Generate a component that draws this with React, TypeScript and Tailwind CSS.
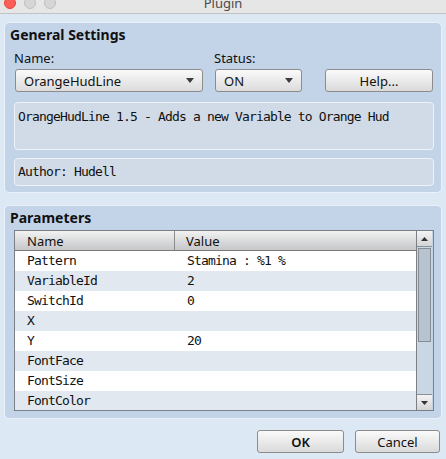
import React from 'react';

const mono = "font-['DejaVu_Sans_Mono',monospace] text-[13px] tracking-[-0.83px] text-[#111]";

const rows: [string, string][] = [
  ['Pattern', 'Stamina : %1 %'],
  ['VariableId', '2'],
  ['SwitchId', '0'],
  ['X', ''],
  ['Y', '20'],
  ['FontFace', ''],
  ['FontSize', ''],
  ['FontColor', ''],
];

function Caret() {
  return (
    <svg width="8" height="5" viewBox="0 0 8 5" className="shrink-0">
      <path d="M0 0 H8 L4 5 Z" fill="#3c3c3c" />
    </svg>
  );
}

function Dropdown({ value, width }: { value: string; width: string }) {
  return (
    <div className={`${width} h-[23px] flex items-center justify-between pl-[8px] pr-[8px] rounded-[3px] border border-[#8c8c8c] bg-gradient-to-b from-[#fafafa] to-[#dcdcdc]`}>
      <span className="leading-[16px]">{value}</span>
      <Caret />
    </div>
  );
}

function Btn({ label, width, bold }: { label: string; width: string; bold?: boolean }) {
  return (
    <div className={`${width} h-[23px] flex items-center justify-center rounded-[3px] border border-[#8c8c8c] bg-gradient-to-b from-[#fafafa] to-[#dadada] ${bold ? 'font-semibold' : ''}`}>
      <span className="leading-[16px]">{label}</span>
    </div>
  );
}

export default function App() {
  return (
    <div className="w-[446px] h-[459px] overflow-hidden bg-[#dde8f5] font-['Noto_Sans',sans-serif] text-[13px] text-[#111]">
      {/* Title bar */}
      <div className="h-[14px] overflow-hidden bg-[#e6e6e6] border-b border-[#c2c2c2] grid">
        <div className="col-start-1 row-start-1 flex gap-[8px] pl-[4px] -mt-[3px]">
          <div className="w-[12px] h-[12px] rounded-full bg-[#fc5f57] border border-[#e0443e]" />
          <div className="w-[12px] h-[12px] rounded-full bg-[#d6d6d6] border border-[#c0c0c0]" />
          <div className="w-[12px] h-[12px] rounded-full bg-[#d6d6d6] border border-[#c0c0c0]" />
        </div>
        <div className="col-start-1 row-start-1 text-center -mt-[5px] leading-[16px] text-[#4a4a4a]">Plugin</div>
      </div>

      <div className="px-[4px] pt-[8px]">
        {/* General Settings */}
        <div className="h-[171px] rounded-[5px] border border-[#eaf1fa] bg-[#c3d4e9] pt-[4px] pl-[5px]">
          <div className="font-bold text-[14px] leading-[16px]">General Settings</div>
          <div className="flex mt-[7px] pl-[4px] leading-[16px]">
            <span className="w-[200px]">Name:</span>
            <span>Status:</span>
          </div>
          <div className="flex mt-[3px] pl-[5px]">
            <Dropdown value="OrangeHudLine" width="w-[188px]" />
            <div className="ml-[12px]">
              <Dropdown value="ON" width="w-[87px]" />
            </div>
            <div className="ml-[23px]">
              <Btn label="Help..." width="w-[108px]" />
            </div>
          </div>
          <div className="ml-[4px] mt-[10px] w-[420px] h-[48px] rounded-[4px] border border-[#eef3f9] bg-[#d0dbe7] px-[3px] pt-[6px]">
            <div className={`${mono} leading-[16px]`}>OrangeHudLine 1.5 - Adds a new Variable to Orange Hud</div>
          </div>
          <div className="ml-[4px] mt-[8px] w-[420px] h-[28px] rounded-[4px] border border-[#eef3f9] bg-[#d0dbe7] px-[3px] flex items-center">
            <div className={`${mono} leading-[16px]`}>Author: Hudell</div>
          </div>
        </div>

        {/* Parameters */}
        <div className="mt-[12px] h-[214px] rounded-[5px] border border-[#eaf1fa] bg-[#c3d4e9] pt-[4px] pl-[5px]">
          <div className="font-bold text-[14px] leading-[16px]">Parameters</div>
          <div className="ml-[4px] mt-[4px] w-[420px] h-[181px] border border-[#7b8087] flex overflow-hidden">
            <div className="w-[402px] border-r border-[#7b8087] flex flex-col">
              <div className="h-[20px] shrink-0 flex border-b border-[#7b7b7b] bg-gradient-to-b from-[#f2f2f2] to-[#c5c7c9] leading-[16px]">
                <div className="w-[160px] pl-[12px] border-r border-[#8d8d8d] flex items-center">Name</div>
                <div className="pl-[11px] flex items-center">Value</div>
              </div>
              {rows.map(([n, v], i) => (
                <div key={n} className={`h-[20px] shrink-0 flex items-center ${i % 2 === 0 ? 'bg-white' : 'bg-[#e2e8ef]'}`}>
                  <div className={`${mono} w-[160px] pl-[12px] leading-[16px]`}>{n}</div>
                  <div className={`${mono} pl-[12px] leading-[16px]`}>{v}</div>
                </div>
              ))}
            </div>
            <div className="w-[15px] bg-[#c9d6e3] flex flex-col">
              <div className="h-[16px] flex items-center justify-center border-b border-[#8a9096] bg-gradient-to-b from-[#f4f4f4] to-[#d4d4d4]">
                <svg width="7" height="4" viewBox="0 0 7 4"><path d="M0 4 H7 L3.5 0 Z" fill="#333" /></svg>
              </div>
              <div className="mt-[1px] mx-[1px] h-[94px] border border-[#878d93] bg-[#b7c4d0]" />
              <div className="flex-1" />
              <div className="h-[16px] flex items-center justify-center border-t border-[#8a9096] bg-gradient-to-b from-[#f4f4f4] to-[#d4d4d4]">
                <svg width="7" height="4" viewBox="0 0 7 4"><path d="M0 0 H7 L3.5 4 Z" fill="#333" /></svg>
              </div>
            </div>
          </div>
        </div>
      </div>

      {/* Dialog buttons */}
      <div className="flex justify-end gap-[11px] pr-[6px] mt-[11px]">
        <Btn label="OK" width="w-[87px]" bold />
        <Btn label="Cancel" width="w-[85px]" />
      </div>
    </div>
  );
}
